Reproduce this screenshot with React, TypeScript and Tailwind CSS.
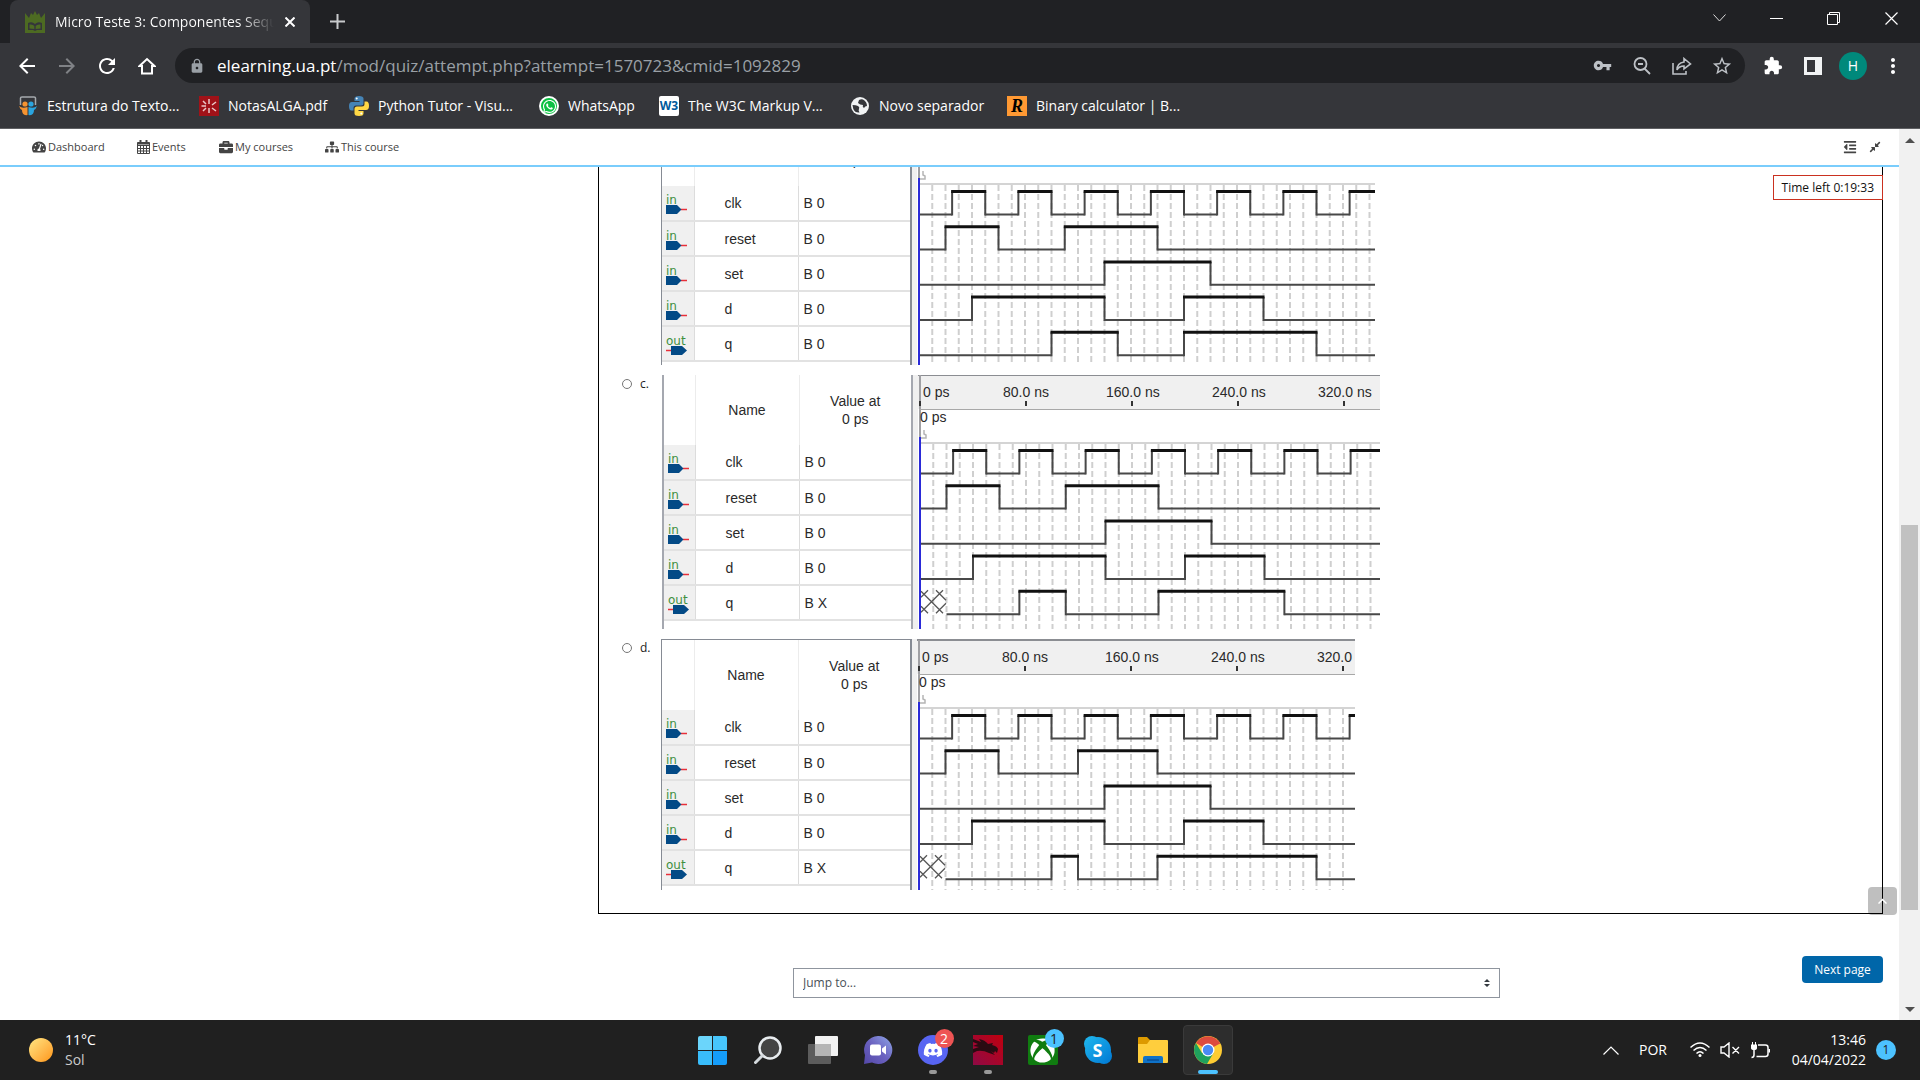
import React from "react";
import {
  MdArrowBack,
  MdArrowForward,
  MdExtension,
  MdLock,
  MdMoreVert,
  MdRefresh,
  MdStarBorder,
  MdVpnKey,
} from "react-icons/md";
import {
  FaBriefcase,
  FaCompressAlt,
  FaDiscord,
  FaOutdent,
  FaSitemap,
  FaTachometerAlt,
  FaWhatsapp,
  FaXbox,
} from "react-icons/fa";

type Edge = number[];

interface Signal {
  name: string;
  value: string;
  output?: boolean;
  unknownUntil?: number;
  edges: Edge;
}

const CLOCK: Edge = [25, 50, 75, 100, 125, 150, 175, 200, 225, 250, 275, 300, 325, 350];
const SET: Edge = [140, 220];
const D: Edge = [40, 140, 200, 260];

function signals(reset: Edge, q: Edge, unknown: boolean): Signal[] {
  return [
    { name: "clk", value: "B 0", edges: CLOCK },
    { name: "reset", value: "B 0", edges: reset },
    { name: "set", value: "B 0", edges: SET },
    { name: "d", value: "B 0", edges: D },
    {
      name: "q",
      value: unknown ? "B X" : "B 0",
      output: true,
      unknownUntil: unknown ? 20 : 0,
      edges: q,
    },
  ];
}

const OPTION_B = signals([20, 60, 110, 180], [100, 150, 200, 300], false);
const OPTION_C = signals([20, 60, 110, 180], [75, 110, 180, 275], true);
const OPTION_D = signals([20, 60, 120, 180], [100, 120, 180, 300], true);

const toX = (ns: number) => 2 + ns * 1.325;

function Trace({ signal, row, width }: { signal: Signal; row: number; width: number }) {
  const high = 75.5 + row * 35.2;
  const low = 98.4 + row * 35.2;
  const start = toX(signal.unknownUntil ?? 0);
  const points = [...signal.edges.map(toX).filter((x) => x < width), width];
  let lows = "";
  let highs = "";
  let edges = "";
  let x = start;
  points.forEach((next, i) => {
    if (i % 2 === 0) lows += `M${x} ${low}H${next}`;
    else highs += `M${x - 1} ${high}H${next + 1}`;
    if (next < width) edges += `M${next} ${high}V${low + 1}`;
    x = next;
  });
  const t = high - 1;
  return (
    <g fill="none">
      <path d={lows} stroke="#484848" strokeWidth="2" />
      <path d={edges} stroke="#484848" strokeWidth="2" />
      <path d={highs} stroke="#111" strokeWidth="3" />
      {signal.unknownUntil ? (
        <path
          transform={`translate(3 ${t})`}
          d="M0 1L22 23M22 0L0 22M15 0L25 10M25 13L15 23M7 0L0 7M0 16L7 23"
          stroke="#555"
          strokeWidth="1.3"
        />
      ) : null}
    </g>
  );
}

function PortIcon({ output }: { output?: boolean }) {
  return (
    <svg width="22" height="26" viewBox="0 0 22 26" className="block" aria-hidden="true">
      <text x="0" y="14" fontSize="12" fill="#3f8f3f" fontFamily="DejaVu Sans, sans-serif">
        {output ? "out" : "in"}
      </text>
      {output ? (
        <>
          <path d="M0 19.500H6" stroke="#e8303a" strokeWidth="1.5" />
          <path d="M5 15H16L21 19.500L16 24H5Z" fill="#034a86" />
        </>
      ) : (
        <>
          <path d="M15 19.500H21" stroke="#e8303a" strokeWidth="1.5" />
          <path d="M0 15H11L15.500 19.500L11 24H0Z" fill="#034a86" />
        </>
      )}
    </svg>
  );
}

function Simulation({
  rows,
  width,
  height,
  framed,
}: {
  rows: Signal[];
  width: number;
  height: number;
  framed?: boolean;
}) {
  const grid = Array.from({ length: 35 }, (_, i) => toX((i + 1) * 10)).filter((x) => x < width);
  return (
    <div
      className={`flex shrink-0 overflow-hidden font-['Liberation_Sans',sans-serif] text-sm text-[#2a2a2a] ${
        framed ? "" : "pl-px"
      }`}
      style={{ height }}
    >
      <div
        className={`w-[251px] shrink-0 border-r-2 ${
          framed ? "border-t border-l border-[#868b94]" : "border-l-2 border-[#a5a8b0]"
        }`}
      >
        <table className="w-full table-fixed border-collapse">
          <colgroup>
            <col className={framed ? "w-[32px]" : "w-[31px]"} />
            <col className="w-[104px]" />
            <col />
          </colgroup>
          <thead>
            <tr className="h-[70px]">
              <th className="border-r border-[#ececec]" aria-label="Port" />
              <th className="border-r border-[#ececec] p-0 font-normal">Name</th>
              <th className="p-0 font-normal leading-[18px]">
                Value at
                <br />0 ps
              </th>
            </tr>
          </thead>
          <tbody>
            {rows.map((s) => (
              <tr key={s.name} className="h-[35px] border-b-2 border-[#e2e2e2]">
                <td className="border-r border-[#dcdcdc] bg-[#f0f0f0] p-0 pl-1">
                  <PortIcon output={s.output} />
                </td>
                <td className="border-r border-[#dcdcdc] p-0 pl-[30px]">{s.name}</td>
                <td className="p-0 pl-[5px]">{s.value}</td>
              </tr>
            ))}
          </tbody>
        </table>
      </div>
      <div className="w-[5px] shrink-0 bg-[#f0f0f0]" />
      <svg
        width={width}
        height={height}
        viewBox={`0 0 ${width} ${height}`}
        className="shrink-0"
        role="img"
        aria-label="Waveforms"
      >
        <g transform={framed ? "translate(0 1)" : undefined}>
          <rect x="0" y="-1" width={width} height="35" fill="#f0f0f0" />
          <rect x="0" y={framed ? -1 : 0} width={width} height={framed ? 2 : 1} fill="#8b8d92" />
          <rect x="1" y="0" width="2" height="62" fill="#a0a0a4" />
          <path d={`M1 34.500H${width}`} stroke="#a8a8a8" />
          <path d={`M1 68H${width}`} stroke="#d4d4d4" strokeWidth="2" />
          <g fontSize="14" fill="#2a2a2a">
            <text x="5" y="22">0 ps</text>
            {[80, 160, 240, 320].map((t) => (
              <text key={t} x={toX(t) - (t === 80 ? 23 : 26)} y="22">
                {framed && t === 320 ? "320.0" : `${t}.0 ns`}
              </text>
            ))}
            <text x="2" y="47">0 ps</text>
          </g>
          {[0, 80, 160, 240, 320].map((t) => (
            <rect key={t} x={Math.round(toX(t)) - 1} y="26" width="2" height="5" fill="#333" />
          ))}
          <path d="M3 63H8V60L6 59V55" stroke="#b5b5b5" fill="none" strokeWidth="1.500" />
          {grid.map((x) => (
            <path
              key={x}
              d={`M${x} 69V${height}`}
              stroke="#cfcfcf"
              strokeWidth="2"
              strokeDasharray="6 3"
            />
          ))}
          {rows.map((s, i) => (
            <Trace key={s.name} signal={s} row={i} width={width} />
          ))}
          <rect x="1" y="62" width="2" height={height} fill="#2a2ad8" />
        </g>
      </svg>
    </div>
  );
}

function Option({ letter, children }: { letter: string; children: React.ReactNode }) {
  return (
    <li className="flex items-start">
      <label className="flex h-[18px] w-[39px] items-center gap-2 text-xs text-[#222]">
        <input
          type="radio"
          name="answer"
          className="size-[10px] appearance-none rounded-full border border-[#767676] bg-white"
        />
        {letter}.
      </label>
      {children}
    </li>
  );
}

const bookmarks = [
  {
    label: "Estrutura do Texto...",
    width: "w-[181px]",
    icon: (
      <svg width="18" height="20" viewBox="0 0 18 20">
        <path d="M1.500 9V2Q1.500 1 3 1H15Q16.500 1 16.500 2V9" fill="none" stroke="#a5a9ad" strokeWidth="1.500" />
        <circle cx="6" cy="8" r="2.600" fill="#f59331" />
        <circle cx="12" cy="8" r="2.600" fill="#2aa5e0" />
        <path d="M0 10Q3 13 8.500 11V19Q3 20 3 14Q1 13 0 10Z" fill="#f59331" />
        <path d="M18 10Q15 13 9.500 11V19Q15 20 15 14Q17 13 18 10Z" fill="#2aa5e0" />
      </svg>
    ),
  },
  {
    label: "NotasALGA.pdf",
    width: "w-[150px]",
    icon: (
      <svg width="20" height="20" viewBox="0 0 20 20">
        <rect width="20" height="20" fill="#a01218" />
        <path d="M10 3V8M10 12V17M2.500 10H7M13 9L17 6M13 12L17 15M7 8L4 5M7 12L4 15" stroke="#e9c9c9" strokeWidth="1.500" />
      </svg>
    ),
  },
  {
    label: "Python Tutor - Visu...",
    width: "w-[190px]",
    icon: (
      <svg width="20" height="20" viewBox="0 0 20 20">
        <path d="M10 0Q5.500 0 5.500 2.500V5H10.500V6H3Q0 6 0 10Q0 14.500 2.500 14.500H4.500V12Q4.500 9.500 7 9.500H12Q14.500 9.500 14.500 7V2.500Q14.500 0 10 0Z" fill="#4584b6" />
        <path d="M10 20Q14.500 20 14.500 17.500V15H9.500V14H17Q20 14 20 10Q20 5.500 17.500 5.500H15.500V8Q15.500 10.500 13 10.500H8Q5.500 10.500 5.500 13V17.500Q5.500 20 10 20Z" fill="#ffd845" />
        <circle cx="7.700" cy="2.600" r="1" fill="#fff" />
        <circle cx="12.300" cy="17.400" r="1" fill="#fff" />
      </svg>
    ),
  },
  {
    label: "WhatsApp",
    width: "w-[120px]",
    icon: (
      <span className="flex size-5 items-center justify-center rounded-full border-2 border-white bg-[#0cc143] text-white">
        <FaWhatsapp className="size-[15px]" />
      </span>
    ),
  },
  {
    label: "The W3C Markup V...",
    width: "w-[191px]",
    icon: (
      <span className="flex size-5 items-center justify-center rounded-xs bg-white font-['Open_Sans',sans-serif] text-xs font-bold text-[#005a9c]">
        W3
      </span>
    ),
  },
  {
    label: "Novo separador",
    width: "w-[157px]",
    icon: (
      <svg width="18" height="18" viewBox="0 0 18 18">
        <circle cx="9" cy="9" r="9" fill="#f1f3f4" />
        <path d="M1.500 8Q5 8 7 9Q9 10 8 12Q7 13 8.500 15.500Q4 16 2.300 12ZM8 3Q10 2 12 2.500Q16 4.500 16 9Q14 9 13 11Q11 10 12 8Q9 8 7 6Z" fill="#35363a" />
      </svg>
    ),
  },
  {
    label: "Binary calculator | B...",
    width: "w-[190px]",
    icon: (
      <span className="flex size-5 items-center justify-center bg-[#f93] font-['Liberation_Serif',serif] text-lg font-bold text-black italic">
        R
      </span>
    ),
  },
];

function CalendarIcon() {
  return (
    <svg width="13" height="14" viewBox="0 0 13 14" fill="none" stroke="#444">
      <path d="M0.500 2.500H12.500V13.500H0.500ZM0.500 5.500H12.500M0.500 8.500H12.500M0.500 11H12.500M3.500 5V13.500M6.500 5V13.500M9.500 5V13.500" />
      <path d="M0.500 3.500H12.500M3.500 0V4M9.500 0V4" strokeWidth="2" />
    </svg>
  );
}

function BrowserChrome() {
  return (
    <header className="shrink-0 bg-[#35363a] font-['Open_Sans',sans-serif] text-white">
      <div className="flex h-[43px] bg-[#202124] pl-[10px]">
        <div className="flex w-[300px] items-center rounded-t-lg bg-[#35363a] pr-[15px] pl-[15px]">
          <svg width="20" height="22" viewBox="0 0 20 22" className="shrink-0">
            <path d="M0 2L4 7L6 2L8 4L10 0L12 4L14 2L16 7L20 2V22H0Z" fill="#4d6b22" />
            <path d="M3 12Q7 10 10 13Q13 10 17 12V19H12L10 20L8 19H3Z" fill="#35363a" />
            <path d="M4.500 13.500Q8 13 9.300 15V18L4.500 17.500ZM15.500 13.500Q12 13 10.700 15V18L15.500 17.500Z" fill="#4d6b22" />
          </svg>
          <span className="ml-[10px] min-w-0 flex-1 overflow-hidden bg-linear-to-r from-white from-85% to-transparent bg-clip-text text-sm whitespace-nowrap text-transparent">
            Micro Teste 3: Componentes Sequenciais
          </span>
          <button aria-label="Close tab" className="ml-[11px]">
            <svg width="10" height="10" viewBox="0 0 10 10" stroke="#fff" strokeWidth="2">
              <path d="M0.500 0.500L9.500 9.500M9.500 0.500L0.500 9.500" />
            </svg>
          </button>
        </div>
        <button aria-label="New tab" className="ml-5">
          <svg width="15" height="15" viewBox="0 0 15 15" stroke="#c8cacc" strokeWidth="2">
            <path d="M7.500 0V15M0 7.500H15" />
          </svg>
        </button>
        <div className="ml-auto flex h-9 items-center">
          <button aria-label="Search tabs" className="flex w-[57px] justify-center">
            <svg width="13" height="8" viewBox="0 0 13 8" fill="none" stroke="#ddd">
              <path d="M0.500 0.500L6.500 7L12.500 0.500" />
            </svg>
          </button>
          <button aria-label="Minimize" className="flex w-[57px] justify-center">
            <span className="h-px w-[13px] bg-white" />
          </button>
          <button aria-label="Restore" className="flex w-[57px] justify-center">
            <svg width="13" height="13" viewBox="0 0 13 13" fill="none" stroke="#fff">
              <path d="M0.500 2.500H10.500V12.500H0.500ZM2.500 2.500V0.500H12.500V10.500H10.500" />
            </svg>
          </button>
          <button aria-label="Close" className="flex w-[58px] justify-center">
            <svg width="13" height="13" viewBox="0 0 13 13" stroke="#fff" strokeWidth="1.200">
              <path d="M0.500 0.500L12.500 12.500M12.500 0.500L0.500 12.500" />
            </svg>
          </button>
        </div>
      </div>
      <div className="flex h-[45px] items-center pl-[7px]">
        <button aria-label="Back" className="flex w-10 justify-center">
          <MdArrowBack className="size-6" />
        </button>
        <button aria-label="Forward" className="flex w-10 justify-center text-[#808286]">
          <MdArrowForward className="size-6" />
        </button>
        <button aria-label="Reload" className="flex w-10 justify-center">
          <MdRefresh className="size-6" />
        </button>
        <button aria-label="Home" className="flex w-10 justify-center">
          <svg width="18" height="18" viewBox="0 0 18 18" fill="none" stroke="#fff" strokeWidth="2">
            <path d="M1.500 9H4V16.500H14V9H16.500L9 2Z" />
          </svg>
        </button>
        <div className="ml-2 flex h-[35px] min-w-0 flex-1 items-center rounded-full bg-[#202124] pr-[3px] pl-[14px] text-[#bdc1c6]">
          <MdLock className="size-4 shrink-0 text-[#9aa0a6]" />
          <span className="ml-3 min-w-0 flex-1 truncate text-[17px] text-[#9aa0a6]">
            <span className="text-white">elearning.ua.pt</span>
            /mod/quiz/attempt.php?attempt=1570723&amp;cmid=1092829
          </span>
          <button aria-label="Passwords" className="flex w-10 justify-center">
            <MdVpnKey className="size-[19px]" />
          </button>
          <button aria-label="Zoom" className="flex w-10 justify-center">
            <svg width="18" height="18" viewBox="0 0 18 18" fill="none" stroke="#bdc1c6" strokeWidth="1.800">
              <circle cx="7.500" cy="7" r="6" />
              <path d="M11.500 11.500L17 17M5 7H10" />
            </svg>
          </button>
          <button aria-label="Share" className="flex w-10 justify-center">
            <svg width="20" height="18" viewBox="0 0 20 18" fill="none" stroke="#bdc1c6" strokeWidth="1.600">
              <path d="M1 6V17H14V14M12 1.500L18.500 7L12 12V9Q7 9 5 13Q5 6 12 5Z" />
            </svg>
          </button>
          <button aria-label="Bookmark this page" className="flex w-10 justify-center">
            <MdStarBorder className="size-[22px]" />
          </button>
        </div>
        <div className="flex items-center pr-[7px] pl-[8px]">
          <button aria-label="Extensions" className="flex w-10 justify-center">
            <MdExtension className="size-5" />
          </button>
          <button aria-label="Side panel" className="flex w-10 justify-center">
            <svg width="18" height="18" viewBox="0 0 18 18">
              <path d="M0 0H18V18H0ZM3 3V15H11V3Z" fill="#f1f3f4" fillRule="evenodd" />
            </svg>
          </button>
          <button aria-label="Profile" className="flex w-10 justify-center">
            <span className="flex size-7 items-center justify-center rounded-full bg-[#00897b] text-sm">H</span>
          </button>
          <button aria-label="Menu" className="flex w-10 justify-center">
            <MdMoreVert className="size-6" />
          </button>
        </div>
      </div>
      <nav aria-label="Bookmarks" className="flex h-[41px] items-center border-b border-[#5f6063] pb-1 pl-[18px]">
        {bookmarks.map((b) => (
          <a key={b.label} href="#" className={`flex shrink-0 items-center gap-[9px] text-sm whitespace-nowrap ${b.width}`}>
            <span className="flex w-5 shrink-0 justify-center">{b.icon}</span>
            {b.label}
          </a>
        ))}
      </nav>
    </header>
  );
}

function SiteNav() {
  return (
    <nav className="flex h-[38px] shrink-0 items-center border-b-2 border-[#7acdfc] bg-white text-[11px] text-[#444]">
      <a href="#" className="ml-8 flex w-[105px] items-center gap-[2px]">
        <FaTachometerAlt className="size-[14px]" />
        Dashboard
      </a>
      <a href="#" className="flex w-[82px] items-center gap-[2px]">
        <CalendarIcon />
        Events
      </a>
      <a href="#" className="flex w-[106px] items-center gap-[2px]">
        <FaBriefcase className="size-[14px]" />
        My courses
      </a>
      <a href="#" className="flex items-center gap-[2px]">
        <FaSitemap className="size-[14px]" />
        This course
      </a>
      <span className="ml-auto flex items-center gap-3 pr-[18px]">
        <button aria-label="Hide blocks">
          <FaOutdent className="size-[14px]" />
        </button>
        <button aria-label="Compact view">
          <FaCompressAlt className="size-3" />
        </button>
      </span>
    </nav>
  );
}

function Scrollbar() {
  return (
    <div className="flex w-[21px] shrink-0 flex-col items-center bg-[#f1f1f1]" aria-hidden="true">
      <span className="mt-[9px] size-0 border-x-[5px] border-b-[5px] border-x-transparent border-b-[#505050]" />
      <span className="grow-[382]" />
      <span className="w-[17px] grow-[384] bg-[#c1c1c1]" />
      <span className="grow-[97]" />
      <span className="mb-2 size-0 border-x-[5px] border-t-[5px] border-x-transparent border-t-[#505050]" />
    </div>
  );
}

function TaskButton({
  label,
  children,
  badge,
  badgeStyle,
  mark,
  active,
}: {
  label: string;
  children: React.ReactNode;
  badge?: string;
  badgeStyle?: string;
  mark?: boolean;
  active?: boolean;
}) {
  return (
    <button
      aria-label={label}
      className={`relative flex h-[50px] w-[50px] items-center justify-center rounded ${
        active ? "border border-[#3a3a3a] bg-[#2d2d2d]" : ""
      }`}
    >
      {children}
      {badge ? (
        <span
          className={`absolute top-1 right-[4px] flex size-[19px] items-center justify-center rounded-full text-sm ${badgeStyle}`}
        >
          {badge}
        </span>
      ) : null}
      {mark ? <span className="absolute bottom-px h-1 w-2 rounded-full bg-[#999]" /> : null}
      {active ? <span className="absolute bottom-0 h-1 w-5 rounded-full bg-[#4cc2ff]" /> : null}
    </button>
  );
}

function Taskbar() {
  return (
    <footer className="grid h-[60px] shrink-0 grid-cols-[1fr_auto_1fr] items-center bg-[#202020] font-['Open_Sans',sans-serif] text-sm leading-5 text-white">
      <div className="flex items-center pl-[29px]">
        <span className="size-6 rounded-full bg-linear-to-br from-[#ffe680] to-[#ff9500]" />
        <span className="ml-[12px]">
          11°C
          <br />
          <span className="text-[#ccc]">Sol</span>
        </span>
      </div>
      <div className="flex gap-[5px]">
        <TaskButton label="Start">
          <span className="grid size-[29px] grid-cols-2 gap-px overflow-hidden rounded-xs">
            <span className="bg-[#6bd5fb]" />
            <span className="bg-[#47c6fc]" />
            <span className="bg-[#39bdfb]" />
            <span className="bg-[#159dfa]" />
          </span>
        </TaskButton>
        <TaskButton label="Search">
          <svg width="28" height="28" viewBox="0 0 28 28" fill="none">
            <circle cx="16" cy="12" r="10.500" stroke="#e8ecef" strokeWidth="2.500" fill="#444" />
            <path d="M8.500 19.500L1.500 26.500" stroke="#d5dade" strokeWidth="3" strokeLinecap="round" />
          </svg>
        </TaskButton>
        <TaskButton label="Task view">
          <svg width="30" height="28" viewBox="0 0 30 28">
            <rect x="0" y="8" width="23" height="20" rx="1" fill="#5c5c5c" />
            <rect x="7" y="0" width="23" height="20" rx="1" fill="#f2f2f2" />
            <rect x="7" y="8" width="16" height="12" fill="#b5b5b5" />
          </svg>
        </TaskButton>
        <TaskButton label="Chat">
          <svg width="30" height="30" viewBox="0 0 30 30">
            <defs>
              <linearGradient id="chat" x1="1" y1="0" x2="0" y2="1">
                <stop offset="0" stopColor="#8fa8e8" />
                <stop offset="0.500" stopColor="#6b62c0" />
                <stop offset="1" stopColor="#5448a8" />
              </linearGradient>
            </defs>
            <path d="M15 1A14 14 0 1 1 9 27.500L1 29L2 20A14 14 0 0 1 15 1Z" fill="url(#chat)" />
            <rect x="7" y="9.500" width="11" height="11" rx="2" fill="#fff" />
            <path d="M19 13.500L23 10.500V19.500L19 16.500Z" fill="#fff" />
          </svg>
        </TaskButton>
        <TaskButton label="Discord" badge="2" badgeStyle="bg-[#ee5454] text-white" mark>
          <span className="flex size-[30px] items-center justify-center rounded-full bg-[#5865f2]">
            <FaDiscord className="size-5" />
          </span>
        </TaskButton>
        <TaskButton label="Game" mark>
          <svg width="30" height="30" viewBox="0 0 30 30">
            <defs>
              <linearGradient id="dragon" x1="1" y1="0" x2="0" y2="1">
                <stop offset="0" stopColor="#c0000e" />
                <stop offset="1" stopColor="#8e0a45" />
              </linearGradient>
            </defs>
            <rect width="30" height="30" fill="url(#dragon)" />
            <path d="M0 4L8 7L6 4Q12 5 15 9L20 8L19 10Q24 11 25 14L24 18L22 16L21 18L18 16L22 20L16 18Q10 15 4 16L0 18V14L6 12L0 11L5 9L0 7Z" fill="#2a0b12" />
          </svg>
        </TaskButton>
        <TaskButton label="Xbox" badge="1" badgeStyle="bg-[#4cc2ff] text-[#222]">
          <span className="flex size-[30px] items-center justify-center rounded-xs bg-[#107c10]">
            <FaXbox className="size-[25px]" />
          </span>
        </TaskButton>
        <TaskButton label="Skype">
          <svg width="28" height="28" viewBox="0 0 28 28">
            <defs>
              <linearGradient id="skype" x1="0" y1="0" x2="28" y2="28" gradientUnits="userSpaceOnUse">
                <stop offset="0" stopColor="#20b8ee" />
                <stop offset="1" stopColor="#0078d4" />
              </linearGradient>
            </defs>
            <g fill="url(#skype)">
              <circle cx="14" cy="14" r="13" />
              <circle cx="8" cy="8" r="8" />
              <circle cx="20" cy="20" r="8" />
            </g>
            <text x="8.500" y="20.500" fontSize="18" fontWeight="700" fill="#fff">S</text>
          </svg>
        </TaskButton>
        <TaskButton label="File Explorer">
          <svg width="30" height="28" viewBox="0 0 30 28">
            <path d="M0 2Q0 1 1 1H9L12 4H20V12H0Z" fill="#dd9a00" />
            <path d="M0 8H9L12 4H29Q30 4 30 5V26Q30 27 29 27H1Q0 27 0 26Z" fill="#ffce3d" />
            <path d="M5 27V22Q5 20 7 20H23Q25 20 25 22V27Z" fill="#0f72c8" />
            <path d="M9 24H21" stroke="#0a4f96" strokeWidth="1.500" />
          </svg>
        </TaskButton>
        <TaskButton label="Chrome" active>
          <svg width="28" height="28" viewBox="0 0 28 28">
            <circle cx="14" cy="14" r="14" fill="#fc3" />
            <path d="M14 14L1.900 7A14 14 0 0 1 26.100 7.500Z" fill="#dd4b3e" />
            <path d="M1.900 7A14 14 0 0 0 13 28L19.500 17L14 14L8 17Z" fill="#1fa15d" />
            <path d="M14 7.500H26.100L24 5Z" fill="#dd4b3e" />
            <circle cx="14" cy="14" r="6.500" fill="#fff" />
            <circle cx="14" cy="14" r="5.200" fill="#4a8af4" />
          </svg>
        </TaskButton>
      </div>
      <div className="flex items-center justify-end pr-6">
        <button aria-label="Show hidden icons">
          <svg width="16" height="9" viewBox="0 0 16 9" fill="none" stroke="#fff" strokeWidth="1.200">
            <path d="M0.500 8.500L8 1L15.500 8.500" />
          </svg>
        </button>
        <button className="ml-5">POR</button>
        <span className="ml-[23px] flex items-center gap-[10px]">
          <svg width="20" height="16" viewBox="0 0 20 16" fill="none" stroke="#fff" strokeWidth="1.500">
            <path d="M0.500 5.500Q10 -3.500 19.500 5.500M3.500 8.500Q10 2.500 16.500 8.500M6.500 11.500Q10 8 13.500 11.500" />
            <circle cx="10" cy="13.500" r="1.500" fill="#fff" stroke="none" />
          </svg>
          <svg width="20" height="16" viewBox="0 0 20 16" fill="none" stroke="#fff" strokeWidth="1.400">
            <path d="M1 5H4L9 1V15L4 11H1ZM12.500 5L19 11.500M19 5L12.500 11.500" />
          </svg>
          <svg width="21" height="17" viewBox="0 0 21 17" fill="none" stroke="#fff" strokeWidth="1.500">
            <path d="M8 3H15.500Q18 3 18 5.500V12Q18 14.500 15.500 14.500H6.500M4 7V13Q4 15.500 1.500 15.500" />
            <path d="M1 2.500H7V6Q7 8 4 8Q1 8 1 6ZM2 0H3V3H2ZM5 0H6V3H5ZM18.500 7H20V10.500H18.500Z" fill="#fff" stroke="none" />
          </svg>
        </span>
        <time className="ml-[15px] w-[80px] text-right whitespace-nowrap">
          13:46
          <br />
          04/04/2022
        </time>
        <span className="ml-[10px] flex size-5 items-center justify-center rounded-full bg-[#4cc2ff] text-xs text-[#222]">
          1
        </span>
      </div>
    </footer>
  );
}

export default function App() {
  return (
    <div className="flex h-screen flex-col overflow-hidden bg-white">
      <BrowserChrome />
      <div className="flex min-h-0 flex-1 font-['Open_Sans',sans-serif]">
        <div className="relative flex min-w-0 flex-1 flex-col">
          <SiteNav />
          <main>
            <div className="pr-4 pl-[598px]">
              <form className="border-x border-b border-black pb-[23px] pl-[23px]">
                <ul className="flex flex-col gap-[10px]">
                  <li className="flex h-[198px] items-end overflow-hidden pl-[39px]">
                    <Simulation rows={OPTION_B} width={458} height={250} framed />
                  </li>
                  <Option letter="c">
                    <Simulation rows={OPTION_C} width={462} height={254} />
                  </Option>
                  <Option letter="d">
                    <Simulation rows={OPTION_D} width={438} height={251} framed />
                  </Option>
                </ul>
              </form>
            </div>
            <div className="mt-[42px] flex items-start pr-4 pl-[793px]">
              <div className="relative mt-3 flex-1">
                <select
                  aria-label="Jump to..."
                  className="h-[30px] w-full appearance-none border border-[#8f959e] bg-white px-[9px] text-xs text-[#495057]"
                >
                  <option>Jump to...</option>
                </select>
                <svg width="6" height="8" viewBox="0 0 6 8" className="pointer-events-none absolute top-[11px] right-[10px]">
                  <path d="M0 3L3 0L6 3ZM0 5L3 8L6 5Z" fill="#343a40" />
                </svg>
              </div>
              <button className="ml-[302px] h-[27px] w-[81px] rounded bg-[#0066a9] text-xs text-white">Next page</button>
            </div>
          </main>
          <div role="timer" className="absolute top-[46px] right-4 flex h-[25px] items-center border border-[#ca3120] bg-white px-2 text-xs text-[#111]">
            Time left 0:19:33
          </div>
          <button
            aria-label="Back to top"
            className="absolute right-[2px] bottom-[105px] flex h-7 w-[29px] items-center justify-center rounded bg-black/25"
          >
            <svg width="9" height="6" viewBox="0 0 9 6" fill="none" stroke="#fff" strokeWidth="1.500">
              <path d="M0.500 5.500L4.500 1.500L8.500 5.500" />
            </svg>
          </button>
        </div>
        <Scrollbar />
      </div>
      <Taskbar />
    </div>
  );
}
